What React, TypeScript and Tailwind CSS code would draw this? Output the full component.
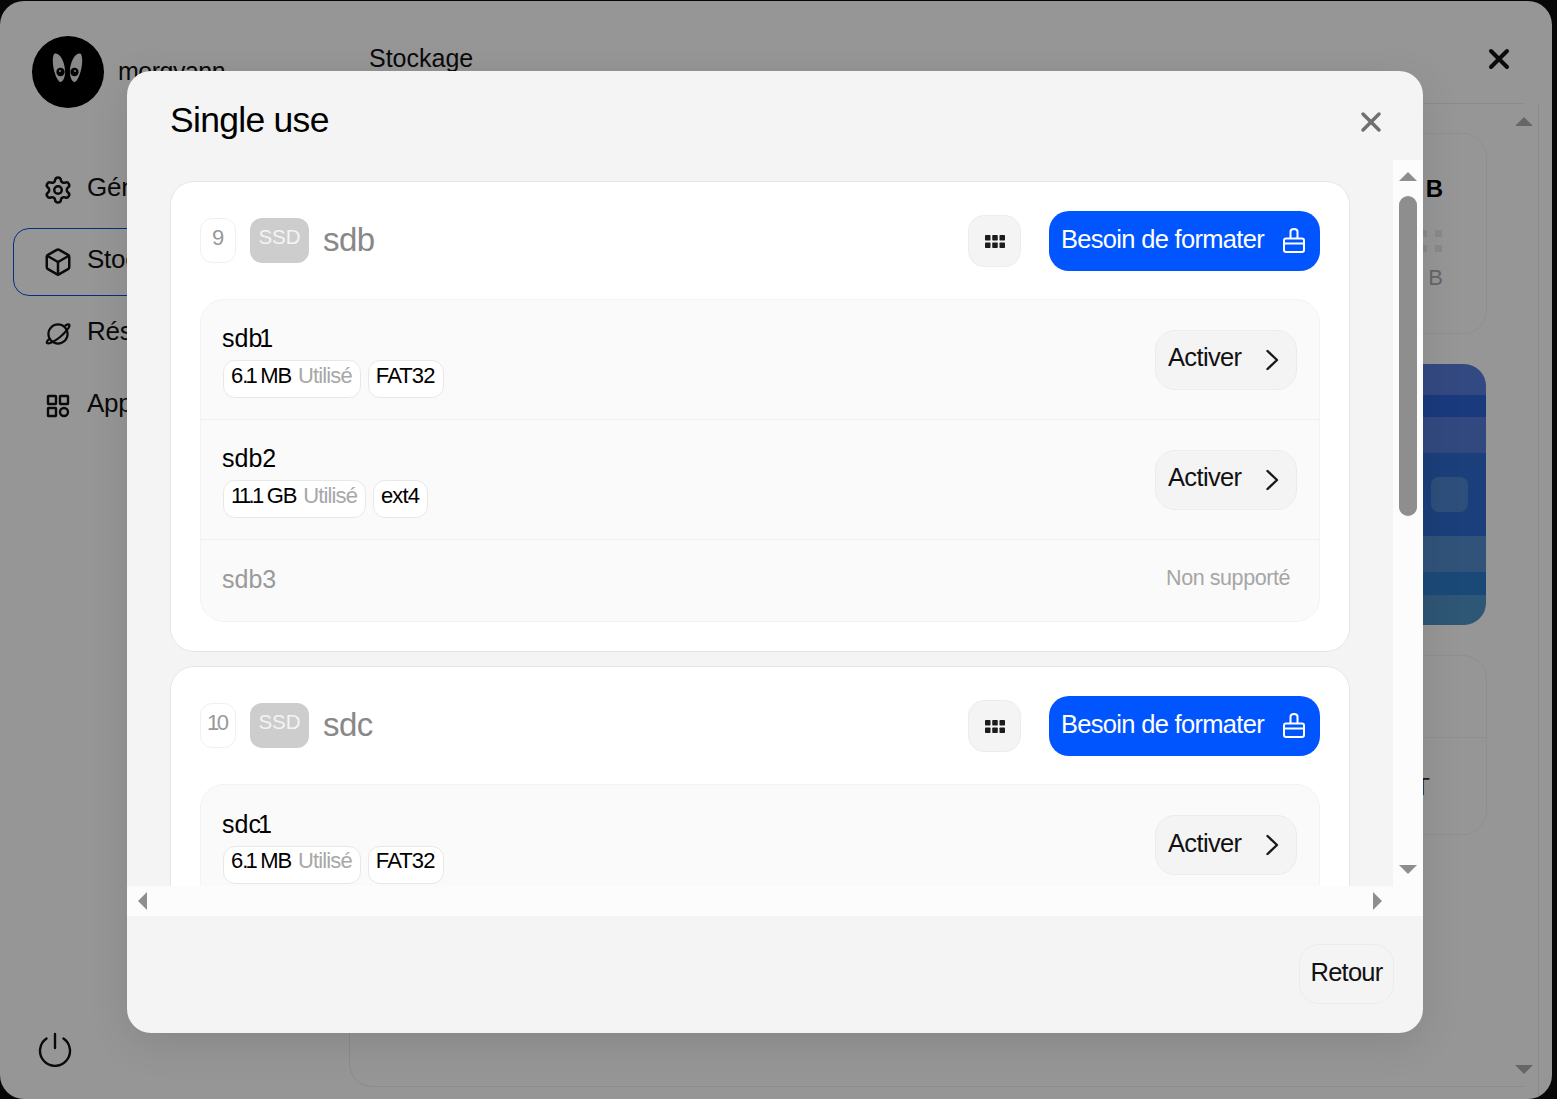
import { Box, Settings, X } from "lucide-react";

const FONT = "font-['Liberation_Sans',Arial,sans-serif]";

type Partition = {
  name: string;
  used?: string;
  fs?: string;
};

type Disk = {
  index: number;
  name: string;
  partitions: Partition[];
};

const DISKS: Disk[] = [
  {
    index: 9,
    name: "sdb",
    partitions: [
      { name: "sdb1", used: "6.1 MB", fs: "FAT32" },
      { name: "sdb2", used: "11.1 GB", fs: "ext4" },
      { name: "sdb3" },
    ],
  },
  {
    index: 10,
    name: "sdc",
    partitions: [{ name: "sdc1", used: "6.1 MB", fs: "FAT32" }],
  },
];

// The reference font has a very narrow "1", so close up the space round it
function TightOnes({ text }: { text: string }) {
  return (
    <>
      {text.split(/(.?1)/).map((part, i) =>
        part.endsWith("1") ? (
          <span key={i} className="tracking-[-0.12em]">
            {part}
          </span>
        ) : (
          part
        )
      )}
    </>
  );
}

function PlanetIcon() {
  return (
    <svg width="26" height="26" viewBox="0 0 26 26" fill="none" stroke="currentColor" strokeWidth="2.2" strokeLinecap="round" strokeLinejoin="round" className="shrink-0">
      <circle cx="13" cy="13" r="9.600" />
      <path d="M20.500 4.500c2.500-1.500 4-1.400 4 0 0 2-5 8-10 12-5 4-11 7-12.500 5.500-.5-.7 0-2 1.500-3.500" />
    </svg>
  );
}

function AppsIcon() {
  return (
    <svg width="26" height="26" viewBox="0 0 26 26" fill="none" stroke="currentColor" strokeWidth="2.4" className="shrink-0">
      <rect x="3" y="3" width="8" height="8" rx="0.5" />
      <rect x="15" y="3" width="8" height="8" rx="0.5" />
      <rect x="3" y="15" width="8" height="8" rx="0.5" />
      <circle cx="19" cy="19" r="4" />
    </svg>
  );
}

function PowerIcon() {
  return (
    <svg width="36" height="36" viewBox="0 0 36 36" fill="none" stroke="currentColor" strokeWidth="2.4" strokeLinecap="round">
      <path d="M18 3v14" />
      <path d="M9.500 7.500a15 15 0 1 0 17 0" />
    </svg>
  );
}

function GridDots() {
  return (
    <svg width="20" height="13" viewBox="0 0 20 13" fill="#1c1c1c">
      <rect x="0" y="0" width="5.500" height="5.500" rx="0.8" />
      <rect x="7.250" y="0" width="5.500" height="5.500" rx="0.8" />
      <rect x="14.500" y="0" width="5.500" height="5.500" rx="0.8" />
      <rect x="0" y="7.500" width="5.500" height="5.500" rx="0.8" />
      <rect x="7.250" y="7.500" width="5.500" height="5.500" rx="0.8" />
      <rect x="14.500" y="7.500" width="5.500" height="5.500" rx="0.8" />
    </svg>
  );
}

function BrushIcon() {
  return (
    <svg width="22" height="25" viewBox="0 0 22 25" fill="none" stroke="white" strokeWidth="2" strokeLinejoin="round" className="shrink-0">
      <path d="M7.500 10.500V3.500C7.500 2 9 1 11 1S14.500 2 14.500 3.500V10.500" />
      <rect x="1" y="10.500" width="20" height="13.500" rx="2" />
      <path d="M1 15.500h20" />
    </svg>
  );
}

function Chevron() {
  return (
    <svg width="14" height="22" viewBox="0 0 14 22" fill="none" stroke="#1a1a1a" strokeWidth="2.400" strokeLinecap="round" strokeLinejoin="round">
      <path d="M2.500 2l9.500 9-9.500 9" />
    </svg>
  );
}

function Triangle({ dir, className }: { dir: "up" | "down" | "left" | "right"; className?: string }) {
  const points = {
    up: "9,0 18,9 0,9",
    down: "0,0 18,0 9,9",
    left: "9,0 9,18 0,9",
    right: "0,0 9,9 0,18",
  }[dir];
  const size = dir === "up" || dir === "down" ? { w: 18, h: 9 } : { w: 9, h: 18 };
  return (
    <svg width={size.w} height={size.h} viewBox={`0 0 ${size.w} ${size.h}`} className={className}>
      <polygon points={points} fill="currentColor" />
    </svg>
  );
}

function Avatar() {
  return (
    <div className="flex h-[72px] w-[72px] shrink-0 items-center justify-center rounded-full bg-black">
      <svg width="72" height="72" viewBox="0 0 72 72" className="blur-[0.6px]">
        <path d="M22 18C28 15 34 28 33 38C32 46 28 48 26 44C22 38 19 24 22 18Z" fill="#e4e4e4" />
        <path d="M49 18C43 15 37 28 38 38C39 46 43 48 45 44C49 38 52 24 49 18Z" fill="#e4e4e4" />
        <circle cx="28.500" cy="36" r="4.200" fill="#080808" />
        <circle cx="42.500" cy="36" r="4.200" fill="#080808" />
        <circle cx="28" cy="35" r="1.100" fill="#cccccc" />
        <circle cx="43" cy="35" r="1.100" fill="#cccccc" />
      </svg>
    </div>
  );
}

function NavItem({ icon, label, active }: { icon: React.ReactNode; label: string; active?: boolean }) {
  return (
    <div
      className={
        active
          ? "flex h-[68px] items-center gap-[16px] rounded-[16px] border border-[#0a4fd0] pl-[31px] text-[26px] text-[#111]"
          : "flex h-[68px] items-center gap-[16px] rounded-[16px] border border-transparent pl-[31px] text-[26px] text-[#111]"
      }
    >
      <span className="flex h-[26px] w-[26px] items-center justify-center">{icon}</span>
      <span className="pb-[5px] tracking-[-0.01em]">{label}</span>
    </div>
  );
}

function Sidebar() {
  return (
    <aside className="flex h-full w-[349px] shrink-0 flex-col pb-[32px] pl-[13px] pr-[40px] pt-[35px]">
      <div className="flex items-center gap-[14px] pl-[19px]">
        <Avatar />
        <span className="text-[25px] tracking-[-0.02em] text-[#111]">morgyann</span>
      </div>
      <nav className="mt-[48px] flex flex-col gap-[4px]">
        <NavItem icon={<Settings size={30} strokeWidth={2} className="shrink-0" />} label="Général" />
        <NavItem icon={<Box size={30} strokeWidth={2} className="shrink-0" />} label="Stockage" active />
        <NavItem icon={<PlanetIcon />} label="Réseau" />
        <NavItem icon={<AppsIcon />} label="Applications" />
      </nav>
      <div className="mt-auto pl-[24px] text-[#111]">
        <PowerIcon />
      </div>
    </aside>
  );
}

function BackgroundContent() {
  return (
    <div className="flex min-w-0 flex-1 flex-col pr-[13px]">
      <header className="mr-[15px] flex h-[103px] shrink-0 items-start justify-between border-b border-[#e8e8e8] pl-[20px] pr-[9px] pt-[40px]">
        <span className="text-[25px] leading-[34px] text-[#111]">Stockage</span>
        <X size={32} strokeWidth={3} className="mt-[2px] text-[#111]" />
      </header>
      <div className="flex min-h-0 flex-1">
        <div className="flex min-w-0 flex-1 flex-col pb-[12px] pt-[29px]">
          <div className="mr-[22px] flex h-[201px] w-[210px] flex-col items-end self-end rounded-[24px] border border-[#eeeeee] pr-[43px] pt-[40px]">
            <span className="text-[24px] font-bold leading-[30px] text-black">B</span>
            <div className="mr-[1px] mt-[26px] grid grid-cols-2 gap-x-[8px] gap-y-[8px]">
              <span className="h-[7px] w-[7px] bg-[#e4e4e4]" />
              <span className="h-[7px] w-[7px] bg-[#e4e4e4]" />
              <span className="h-[7px] w-[7px] bg-[#e4e4e4]" />
              <span className="h-[7px] w-[7px] bg-[#e4e4e4]" />
            </div>
            <span className="mt-[12px] text-[22px] leading-[28px] text-[#aaaaaa]">B</span>
          </div>
          <div className="mr-[23px] mt-[30px] flex h-[261px] w-[209px] shrink-0 flex-col self-end overflow-hidden rounded-[22px]">
            <div className="h-[31px] bg-[#557bd8]" />
            <div className="h-[22px] bg-[#2b61d0]" />
            <div className="h-[36px] bg-[#527ad4]" />
            <div className="flex h-[83px] items-start justify-end bg-[#2d69cc] pr-[18px] pt-[24px]">
              <div className="h-[35px] w-[37px] rounded-[8px] bg-[#4e84cf]" />
            </div>
            <div className="h-[36px] bg-[#538acc]" />
            <div className="h-[23px] bg-[#2d7bc6]" />
            <div className="flex-1 bg-[#4e8fc4]" />
          </div>
          <div className="mr-[22px] mt-[30px] flex h-[180px] w-[210px] shrink-0 flex-col self-end rounded-[24px] border border-[#eeeeee]">
            <div className="h-[82px] border-b border-[#eeeeee]" />
            <div className="flex flex-1 items-center justify-end pr-[56px] pt-[2px] text-[24px] text-[#333]">GPT</div>
          </div>
          <div className="-mr-[15px] mt-[20px] min-h-0 flex-1 rounded-bl-[24px] border-b border-l border-[#e8e8e8]" />
        </div>
        <div className="flex w-[30px] shrink-0 flex-col items-center justify-between border-r border-[#e8e8e8] pb-[25px] pt-[13px] text-[#aaaaaa]">
          <Triangle dir="up" />
          <Triangle dir="down" />
        </div>
      </div>
    </div>
  );
}

function Chip({ children }: { children: React.ReactNode }) {
  return (
    <span className="flex h-[38px] items-center gap-[7px] rounded-[12px] border border-[#e8e8e8] bg-white pb-[8px] pl-[7px] pr-[8px] text-[22px] tracking-[-0.04em] text-black">
      {children}
    </span>
  );
}

function PartitionRow({ part, last }: { part: Partition; last: boolean }) {
  if (!part.used) {
    return (
      <div className="flex h-[81px] items-center justify-between pl-[21px] pr-[29px]">
        <span className="pb-[2px] text-[25px] text-[#9a9a9a]">{part.name}</span>
        <span className="pb-[4px] text-[21.500px] tracking-[-0.02em] text-[#a6a6a6]">Non supporté</span>
      </div>
    );
  }
  return (
    <div className={last ? "flex h-[120px] shrink-0 items-center justify-between pl-[21px] pr-[22px]" : "flex h-[120px] shrink-0 items-center justify-between border-b border-[#efefef] pl-[21px] pr-[22px]"}>
      <div className="flex flex-col pt-[4px]">
        <span className="text-[25px] leading-[26px] text-black">
          <TightOnes text={part.name} />
        </span>
        <div className="ml-px mt-[9px] flex gap-[7px]">
          <Chip>
            <span className="tracking-[-0.05em]">
              <TightOnes text={part.used} />
            </span>
            <span className="text-[#a8a8a8]">Utilisé</span>
          </Chip>
          <Chip>{part.fs}</Chip>
        </div>
      </div>
      <button className="flex h-[60px] w-[142px] items-center justify-between rounded-[20px] border border-[#ececec] bg-[#f4f4f4] pb-[4px] pl-[12px] pr-[17px] text-[25.500px] tracking-[-0.025em] text-[#111]">
        <span>Activer</span>
        <span className="pt-[4px]">
          <Chevron />
        </span>
      </button>
    </div>
  );
}

function DiskCard({ disk }: { disk: Disk }) {
  return (
    <section className="w-[1180px] shrink-0 rounded-[24px] border border-[#e6e6e6] bg-white px-[29px] py-[29px]">
      <div className="flex h-[60px] items-center">
        <span className="mb-px flex h-[45px] w-[36px] items-center justify-center rounded-[12px] border border-[#f0f0f0] pb-[6px] text-[22px] text-[#999]">
          <TightOnes text={String(disk.index)} />
        </span>
        <span className="mb-px ml-[14px] flex h-[45px] w-[59px] items-center justify-center rounded-[12px] bg-[#cdcdcd] pb-[6px] text-[20.500px] text-[#f4f4f4]">
          SSD
        </span>
        <span className="mb-[3px] ml-[14px] text-[33px] tracking-[-0.015em] text-[#888]">{disk.name}</span>
        <button className="ml-auto flex h-[52px] w-[53px] items-center justify-center rounded-[16px] border border-[#ececec] bg-[#f4f4f4]">
          <GridDots />
        </button>
        <button className="ml-[28px] flex h-[60px] w-[271px] items-center justify-between rounded-[20px] bg-[#0055ff] pb-[3px] pl-[12px] pr-[15px] text-[25.500px] tracking-[-0.027em] text-white">
          <span>Besoin de formater</span>
          <span className="pt-[1px]">
            <BrushIcon />
          </span>
        </button>
      </div>
      <div className="mt-[28px] flex flex-col rounded-[24px] border border-[#f3f3f3] bg-[#fafafa]">
        {disk.partitions.map((part, i) => (
          <PartitionRow key={part.name} part={part} last={i === disk.partitions.length - 1} />
        ))}
      </div>
    </section>
  );
}

function SingleUseModal() {
  return (
    <div className="absolute left-[127px] top-[71px] flex h-[962px] w-[1296px] flex-col overflow-hidden rounded-[24px] bg-[#f4f4f4] shadow-[0_10px_40px_rgba(0,0,0,0.1)]">
      <div className="flex h-[89px] shrink-0 items-center justify-between pl-[43px] pr-[36px] pt-[10px]">
        <h2 className="text-[35.500px] tracking-[-0.02em] text-black">Single use</h2>
        <X size={32} strokeWidth={2.6} className="mt-[3px] text-[#707070]" />
      </div>
      <div className="flex h-[726px] shrink-0">
        <div className="flex min-w-0 flex-1 flex-col gap-[14px] overflow-hidden pl-[43px] pt-[21px]">
          {DISKS.map((disk) => (
            <DiskCard key={disk.name} disk={disk} />
          ))}
        </div>
        <div className="relative flex w-[30px] shrink-0 flex-col items-center bg-[#fcfcfc] pt-[12px] text-[#8e8e8e]">
          <Triangle dir="up" />
          <div className="mt-[15px] h-[320px] w-[18px] rounded-full bg-[#8e8e8e]" />
          <Triangle dir="down" className="mb-[12px] mt-auto" />
        </div>
      </div>
      <div className="flex h-[30px] shrink-0 items-center justify-between bg-[#fcfcfc] pl-[11px] pr-[41px] text-[#8e8e8e]">
        <Triangle dir="left" />
        <Triangle dir="right" />
      </div>
      <div className="flex flex-1 items-start justify-end pr-[29px] pt-[28px]">
        <button className="flex h-[60px] w-[95px] items-center justify-center rounded-[20px] border border-[#ececec] pb-[4px] text-[25.500px] tracking-[-0.03em] text-[#111]">
          Retour
        </button>
      </div>
    </div>
  );
}

export default function App() {
  return (
    <div className={`${FONT} relative h-[1099px] w-[1557px] overflow-hidden bg-[#0d0d0d]`}>
      <div className="mt-px flex h-[1098px] w-[1552px] overflow-hidden rounded-[24px] bg-[#fbfbfb]">
        <Sidebar />
        <BackgroundContent />
      </div>
      <div className="absolute inset-0 bg-black/40" />
      <SingleUseModal />
    </div>
  );
}
